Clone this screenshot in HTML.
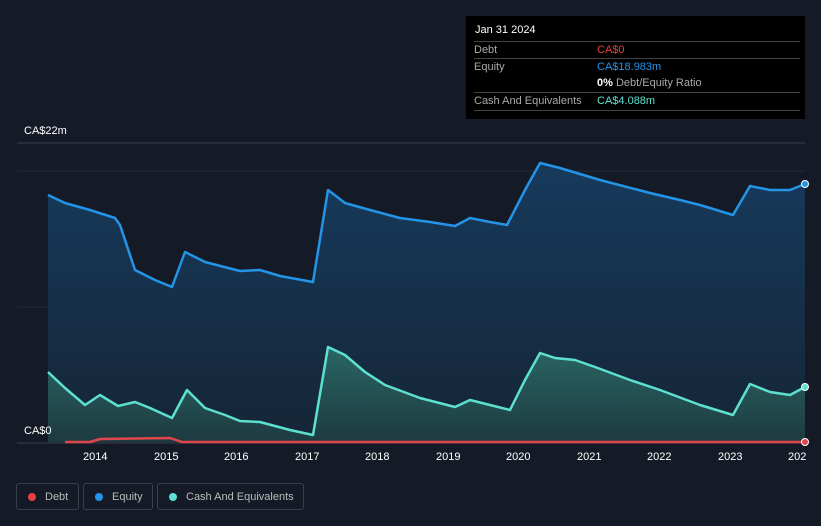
<!DOCTYPE html><html><head><style>
body{margin:0;width:821px;height:526px;background:#151b26;font-family:"Liberation Sans",sans-serif;overflow:hidden;position:relative}
.tt{position:absolute;left:466px;top:16px;width:339px;height:103px;background:#000;color:#fff;font-size:11px}
.tt .r{position:absolute;left:8px;right:5px;border-top:1px solid #444;height:17px;line-height:17px;color:#aaa}
.tt .r span{position:absolute;left:123px}
.leg{position:absolute;top:483px;height:27px;border:1px solid #3a404b;border-radius:3px;color:#bbb;font-size:11px;line-height:27px;box-sizing:border-box}
.leg i{position:absolute;left:11px;top:9px;width:8px;height:8px;border-radius:50%}
.ax{position:absolute;color:#fff;font-size:11px}
</style></head><body>
<svg width="821" height="526" style="position:absolute;left:0;top:0">
<defs><linearGradient id="e" x1="0" y1="0" x2="0" y2="1"><stop offset="0" stop-color="#173a5c"/><stop offset="1" stop-color="#152536"/></linearGradient>
<linearGradient id="c" x1="0" y1="0" x2="0" y2="1"><stop offset="0" stop-color="#2a6664"/><stop offset="1" stop-color="#1d3a40"/></linearGradient></defs>
<line x1="17" y1="143" x2="805" y2="143" stroke="#3a404b"/>
<line x1="17" y1="171" x2="805" y2="171" stroke="#252b36"/>
<line x1="17" y1="307" x2="805" y2="307" stroke="#252b36"/>
<path fill="url(#e)" d="M48,195 L65,203 90,210 115,218 120,225 135,270 155,280 172,287 185,252 205,262 240,271 260,270 280,276 313,282 328,190 345,203 370,210 400,218 430,222 455,226 470,218 490,222 507,225 525,190 540,163 560,168 600,180 650,193 680,200 700,205 733,215 750,186 770,190 790,190 805,184 L805,442 48,442Z"/>
<path fill="url(#c)" d="M48,372 L65,388 85,405 100,395 118,406 135,402 150,408 172,418 187,390 205,408 225,415 240,421 260,422 290,430 313,435 328,347 345,355 365,372 385,385 420,398 455,407 470,400 490,405 510,410 525,380 540,353 555,358 575,360 595,367 630,380 660,390 700,405 733,415 750,384 770,392 790,395 805,387 L805,442 48,442Z"/>
<polyline fill="none" stroke="#2394e8" stroke-width="2.5" stroke-linejoin="round" points="48,195 65,203 90,210 115,218 120,225 135,270 155,280 172,287 185,252 205,262 240,271 260,270 280,276 313,282 328,190 345,203 370,210 400,218 430,222 455,226 470,218 490,222 507,225 525,190 540,163 560,168 600,180 650,193 680,200 700,205 733,215 750,186 770,190 790,190 805,184"/>
<polyline fill="none" stroke="#5ee0d0" stroke-width="2.5" stroke-linejoin="round" points="48,372 65,388 85,405 100,395 118,406 135,402 150,408 172,418 187,390 205,408 225,415 240,421 260,422 290,430 313,435 328,347 345,355 365,372 385,385 420,398 455,407 470,400 490,405 510,410 525,380 540,353 555,358 575,360 595,367 630,380 660,390 700,405 733,415 750,384 770,392 790,395 805,387"/>
<line x1="17" y1="443" x2="805" y2="443" stroke="#3a404b"/>
<polyline fill="none" stroke="#e0474c" stroke-width="2.5" points="65,442 90,442 100,439 170,438 182,442 805,442"/>
<circle cx="805" cy="184" r="3.5" fill="#2394e8" stroke="#fff"/>
<circle cx="805" cy="387" r="3.5" fill="#5ee0d0" stroke="#fff"/>
<circle cx="805" cy="442" r="3.5" fill="#e0474c" stroke="#fff"/>
</svg>
<div class="ax" style="left:24px;top:125px">CA$22m</div>
<div class="ax" style="left:24px;top:425px">CA$0</div>
<div class="ax" style="left:83px;top:451px">2014</div><div class="ax" style="left:154px;top:451px">2015</div><div class="ax" style="left:224px;top:451px">2016</div><div class="ax" style="left:295px;top:451px">2017</div><div class="ax" style="left:365px;top:451px">2018</div><div class="ax" style="left:436px;top:451px">2019</div><div class="ax" style="left:506px;top:451px">2020</div><div class="ax" style="left:577px;top:451px">2021</div><div class="ax" style="left:647px;top:451px">2022</div><div class="ax" style="left:718px;top:451px">2023</div><div class="ax" style="left:788px;top:451px;width:18px;overflow:hidden;white-space:nowrap">2024</div>
<div class="tt">
<div style="position:absolute;left:9px;top:8px">Jan 31 2024</div>
<div class="r" style="top:25px">Debt<span style="color:#e8403f">CA$0</span></div>
<div class="r" style="top:42px">Equity<span style="color:#2394e8">CA$18.983m</span></div>
<div class="r" style="top:59px;border:none"><span><b style="color:#fff">0%</b> Debt/Equity Ratio</span></div>
<div class="r" style="top:76px">Cash And Equivalents<span style="color:#5ee0d0">CA$4.088m</span></div>
<div class="r" style="top:94px;height:0"></div>
</div>
<div class="leg" style="left:16px;width:63px"><i style="background:#e8403f"></i><span style="position:absolute;left:28px">Debt</span></div>
<div class="leg" style="left:83px;width:70px"><i style="background:#2394e8"></i><span style="position:absolute;left:28px">Equity</span></div>
<div class="leg" style="left:157px;width:147px"><i style="background:#5ee0d0"></i><span style="position:absolute;left:28px">Cash And Equivalents</span></div>
</body></html>
